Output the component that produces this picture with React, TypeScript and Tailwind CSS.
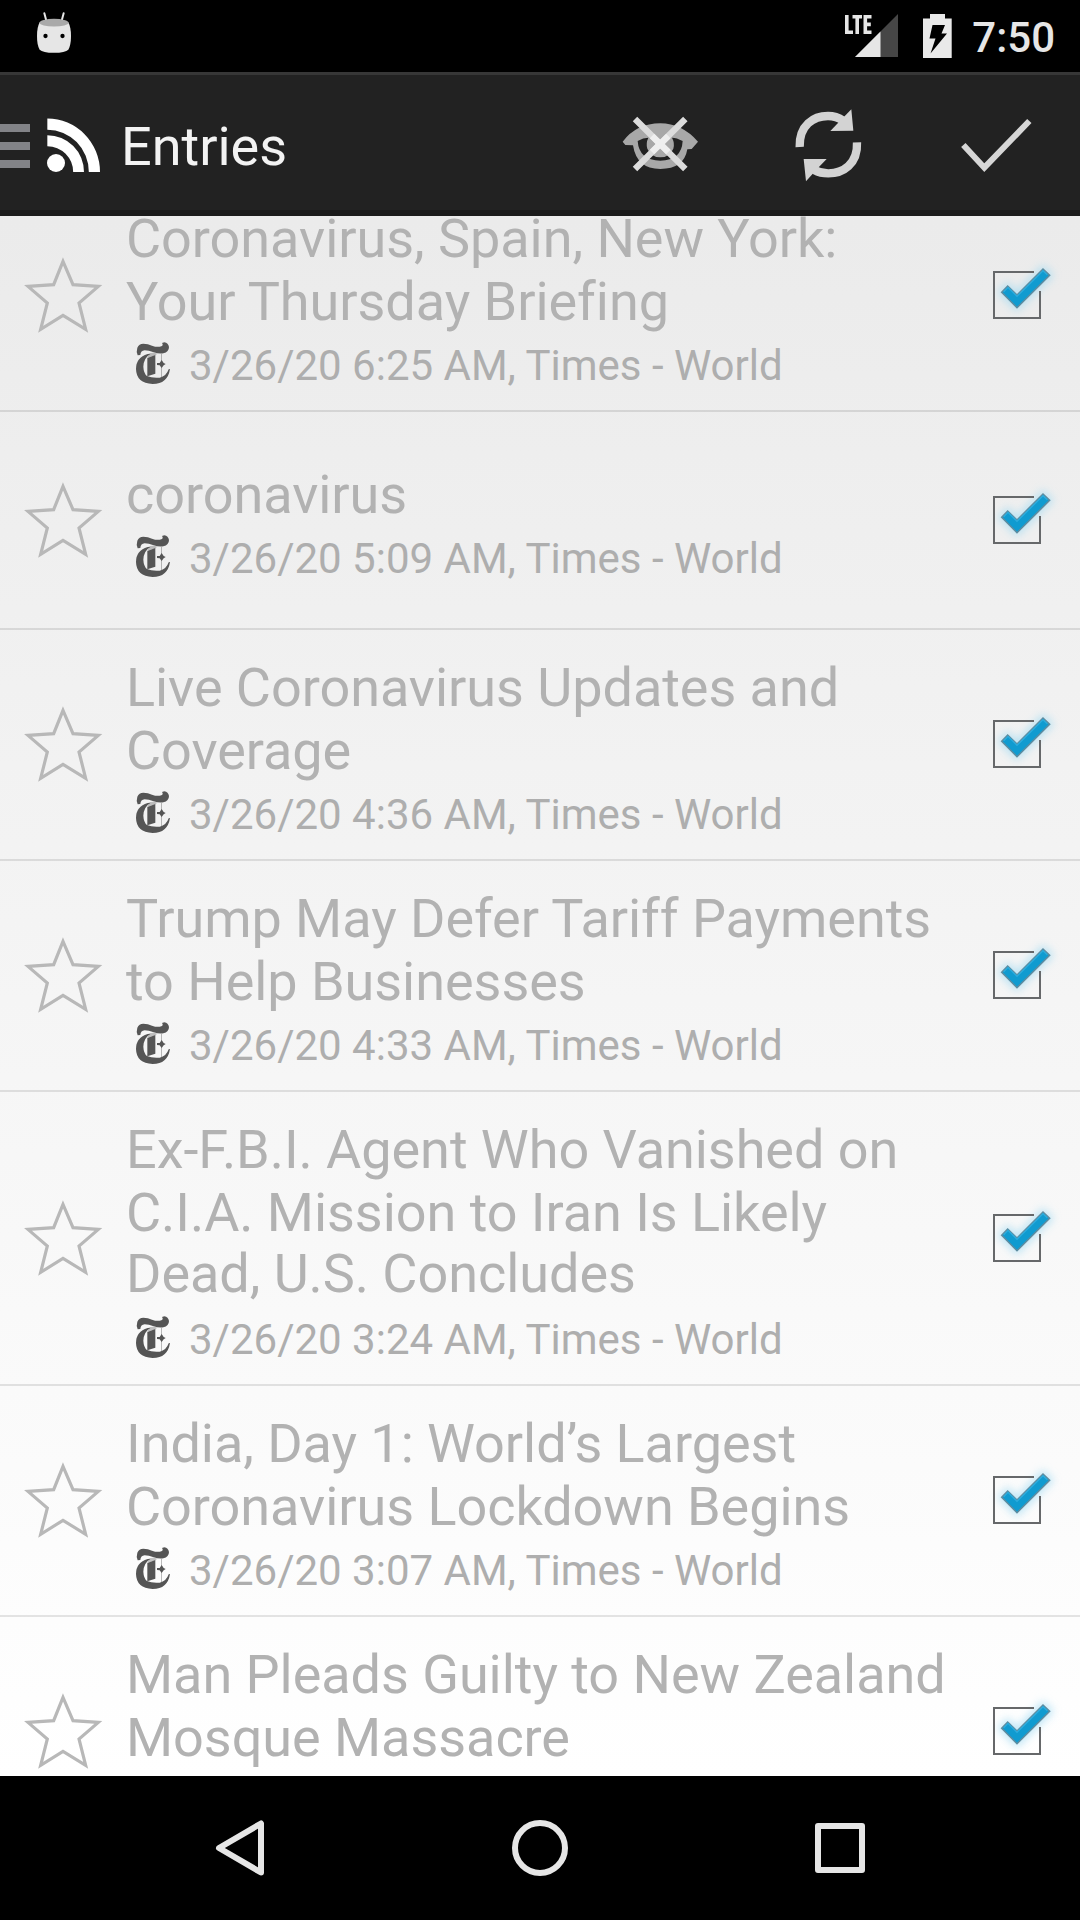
import React from "react";

type Entry = { lines: string[]; time?: string };

const entries: Entry[] = [
  { lines: ["Coronavirus, Spain, New York:", "Your Thursday Briefing"], time: "3/26/20 6:25 AM" },
  { lines: ["coronavirus"], time: "3/26/20 5:09 AM" },
  { lines: ["Live Coronavirus Updates and", "Coverage"], time: "3/26/20 4:36 AM" },
  { lines: ["Trump May Defer Tariff Payments", "to Help Businesses"], time: "3/26/20 4:33 AM" },
  { lines: ["Ex-F.B.I. Agent Who Vanished on", "C.I.A. Mission to Iran Is Likely", "Dead, U.S. Concludes"], time: "3/26/20 3:24 AM" },
  { lines: ["India, Day 1: World’s Largest", "Coronavirus Lockdown Begins"], time: "3/26/20 3:07 AM" },
  { lines: ["Man Pleads Guilty to New Zealand", "Mosque Massacre"] },
];

function StatusBar() {
  return (
    <div className="flex h-[72px] shrink-0 items-start bg-black pl-9 pr-[25px]">
      <svg className="mt-3 h-[42px] w-9" viewBox="108 36 108 126">
        <path d="M133 40l7 26M191 40l-7 26" stroke="#e6e6e6" strokeWidth="6" strokeLinecap="round" />
        <path d="M119 67Q111 82 111 108Q111 136 119 149Q128 158 162 158.500Q196 158 205 149Q213 136 213 108Q213 82 205 67Z" fill="#e6e6e6" />
        <ellipse cx="162" cy="68" rx="43.500" ry="11.500" fill="#a9a9a9" />
        <circle cx="136.500" cy="108" r="6.500" />
        <circle cx="187.500" cy="108" r="6.500" />
      </svg>
      <svg className="ml-auto mt-[14px] h-11 w-[54px]" viewBox="0 0 54 44">
        <path d="M11 43L54 0V43Z" fill="#464646" />
        <path d="M11 43L36.500 17.500V43Z" fill="#e6e6e6" />
        <g stroke="#e6e6e6" strokeWidth="3.600" fill="none">
          <path d="M2.800 1V18.200H9" />
          <path d="M8.500 2.800H18M13.200 2.800V20" />
          <path d="M27.500 2.800H21.300V18.200H27.500M21.300 10.400H26.800" />
        </g>
      </svg>
      <svg className="ml-[24px] mt-[14px] h-11 w-[30px]" viewBox="0 0 30 44">
        <path d="M1 4.500H8V0H23V4.500H29.700V44H1Z" fill="#e9e9e9" />
        <path d="M10.500 11H23L19.500 19.500H25L8.500 39.500L13.500 24.500H7.500Z" fill="#000" />
      </svg>
      <span className="ml-5 mt-[13px] text-[42px] font-medium leading-[49px] text-[#e6e6e6]">7:50</span>
    </div>
  );
}

function AppBar() {
  return (
    <div className="flex h-36 shrink-0 items-center border-b-6 border-t-3 border-b-[#1a1a1a] border-t-[#373737] bg-[#222222] pt-[4px]">
      <div className="mt-[2px] flex h-11 w-[30px] flex-col justify-between">
        <div className="h-2 bg-[#828387]" />
        <div className="h-2 bg-[#828387]" />
        <div className="h-2 bg-[#828387]" />
      </div>
      <svg className="ml-4 h-[56px] w-14" viewBox="138 348 168 168">
        <circle cx="168" cy="486" r="27" fill="#fff" />
        <path d="M142 402.500A110 110 0 0 1 252 513H219.500A77.500 77.500 0 0 0 142 435.500Z" fill="#fff" />
        <path d="M142 352.500A158 160.500 0 0 1 300 513H266.500A124.500 127 0 0 0 142 386Z" fill="#fff" />
      </svg>
      <h1 className="ml-[19px] mt-[4px] text-[54px] leading-[63px] text-[#f3f3f3]">Entries</h1>
      <svg className="-mt-px ml-auto h-14 w-20" viewBox="60 108 240 168">
        <path fillRule="evenodd" d="M68 185Q110 130 181 130Q245 130 294 185L275 207L262 208Q252 267 181 267Q110 267 99 196L76 195ZM113 183Q117 241 181 242Q245 241 248 183Q230 173 216 173Q225 190 220 206Q208 232 181 232Q154 232 142 206Q137 190 145 173Q130 173 113 183Z" fill="#a8a8a8" />
        <path d="M105 117L256 267M256 117L105 267" stroke="#dcdcdc" strokeWidth="19" />
        <path d="M156 168L205 216M205 168L156 216" stroke="#efefef" strokeWidth="19" />
      </svg>
      <svg className="ml-[92px] h-[76px] w-[72px]" viewBox="576 81 216 228">
        <path d="M599 201C597 135 641 108 684 108Q709 108 730 122" stroke="#d3d3d3" strokeWidth="25" fill="none" />
        <path d="M754 88L760 152L691 153L714 129Z" fill="#d3d3d3" />
        <path d="M771 187C774 253 728 280 685 280Q661 280 643 270" stroke="#d3d3d3" strokeWidth="25" fill="none" />
        <path d="M618 304L611 237L680 237L656 262Z" fill="#d3d3d3" />
      </svg>
      <svg className="ml-24 mr-12 h-14 w-[72px]" viewBox="1080 108 216 168">
        <path d="M1090 192L1153 260L1288 120" stroke="#d6d6d6" strokeWidth="18" fill="none" />
      </svg>
    </div>
  );
}

function Star() {
  return (
    <svg className="-mt-px ml-[23px] h-20 w-20 shrink-0" viewBox="69 137 240 240">
      <defs>
        <filter id="soften">
          <feGaussianBlur stdDeviation="0.500" />
        </filter>
      </defs>
      <path d="M189 156L161 226L84 231L142 281L122 360L189 318L257 360L237 281L295 231L219 226Z" fill="none" stroke="#b8b8b8" strokeWidth="9.500" filter="url(#soften)" />
    </svg>
  );
}

function FeedIcon() {
  return (
    <svg className="-mt-[5px] ml-[9px] h-[43px] w-[36px]" viewBox="45 36 108 129" fill="#555555">
      <path d="M53 76Q48 66 52 53Q57 41 70 41Q84 41 96 47Q112 53 124 49Q131 46 126 39L133 37Q145 39 147 51Q147 66 130 70Q117 72 101 67Q86 61 74 61Q62 62 61 75Z" />
      <path d="M83 72Q48 82 48 117Q49 160 98 162Q143 162 150 117L146 118Q139 139 119 143Q96 145 81 138Q71 130 70 110Q71 83 92 71Z" />
      <path d="M82 84L106 75V131L82 139Z" />
      <path d="M123.500 72H125.500V141H123.500Z" opacity="0.600" />
      <path d="M125 90L131 99L137 102L131 106L125 114L119 106L111 105V99L119 99Z" />
      <path d="M88 71Q98 66 112 71L106 76L82 83Z" opacity="0.350" />
    </svg>
  );
}

function CheckMark() {
  return (
    <svg className="-mt-px ml-auto h-[110px] w-[120px] shrink-0" viewBox="0 0 360 330">
      <defs>
        <filter id="glow" x="-50%" y="-50%" width="200%" height="200%">
          <feGaussianBlur stdDeviation="13" />
        </filter>
      </defs>
      <path d="M123 157L143 136L171 163L249 85L271 106L171 205Z" fill="#a4dcf3" stroke="#a4dcf3" strokeWidth="16" filter="url(#glow)" opacity="0.700" />
      <path d="M222 96H102V234H240V153" fill="none" stroke="#66686a" strokeWidth="6" />
      <path d="M125 157L143 138L171 165L249 87L269 106L171 203Z" fill="#109bd0" stroke="#5e8ca0" strokeWidth="4.500" />
      <path d="M131 155L144 142L171 169L249 92L262 104" fill="none" stroke="#2eacdc" strokeWidth="4" />
    </svg>
  );
}

function EntryRow({ entry }: { entry: Entry }) {
  return (
    <li className="flex min-h-[218px] shrink-0 items-center border-b-2 border-black/10">
      <Star />
      <div className="ml-[23px] pb-5 pt-[26px]">
        <h2 className="flow-root text-[54px] leading-[63px] tracking-[-0.045px] text-[#b2b2b2]">
          {entry.lines.map((line, i) => (
            <span key={line} className={i === 2 ? "-mt-[2px] mb-[2px] block whitespace-nowrap" : "block whitespace-nowrap"}>
              {line}
            </span>
          ))}
        </h2>
        <div className="mt-2 flex h-[49px] items-center">
          {entry.time && (
            <>
              <FeedIcon />
              <span className="ml-[18px] whitespace-nowrap text-[42px] leading-[49px] text-[#aeaeae]">
                {entry.time}, Times - World
              </span>
            </>
          )}
        </div>
      </div>
      <CheckMark />
    </li>
  );
}

function NavBar() {
  return (
    <div className="flex h-36 shrink-0 items-center justify-between bg-black px-[210px]">
      <svg className="h-[60px] w-[60px]" viewBox="0 0 60 60" fill="none" stroke="#e6e6e6" strokeWidth="6" strokeLinejoin="round">
        <path d="M51 5.500V54.500L9 30Z" />
      </svg>
      <svg className="h-[60px] w-[60px]" viewBox="0 0 60 60" fill="none" stroke="#e6e6e6" strokeWidth="6">
        <circle cx="30" cy="30" r="25" />
      </svg>
      <svg className="h-[60px] w-[60px]" viewBox="0 0 60 60" fill="none" stroke="#e6e6e6" strokeWidth="6" strokeLinejoin="round">
        <rect x="8" y="8" width="44" height="44" />
      </svg>
    </div>
  );
}

export default function App() {
  return (
    <div className="flex h-[1920px] w-[1080px] flex-col overflow-hidden bg-black font-[Roboto,sans-serif]">
      <StatusBar />
      <AppBar />
      <ul className="flex min-h-0 flex-1 flex-col overflow-hidden bg-linear-to-b from-[#ebebeb] to-white">
        <li className="-mt-[35px] h-0 shrink-0" />
        {entries.map((entry) => (
          <EntryRow key={entry.lines[0]} entry={entry} />
        ))}
      </ul>
      <NavBar />
    </div>
  );
}
